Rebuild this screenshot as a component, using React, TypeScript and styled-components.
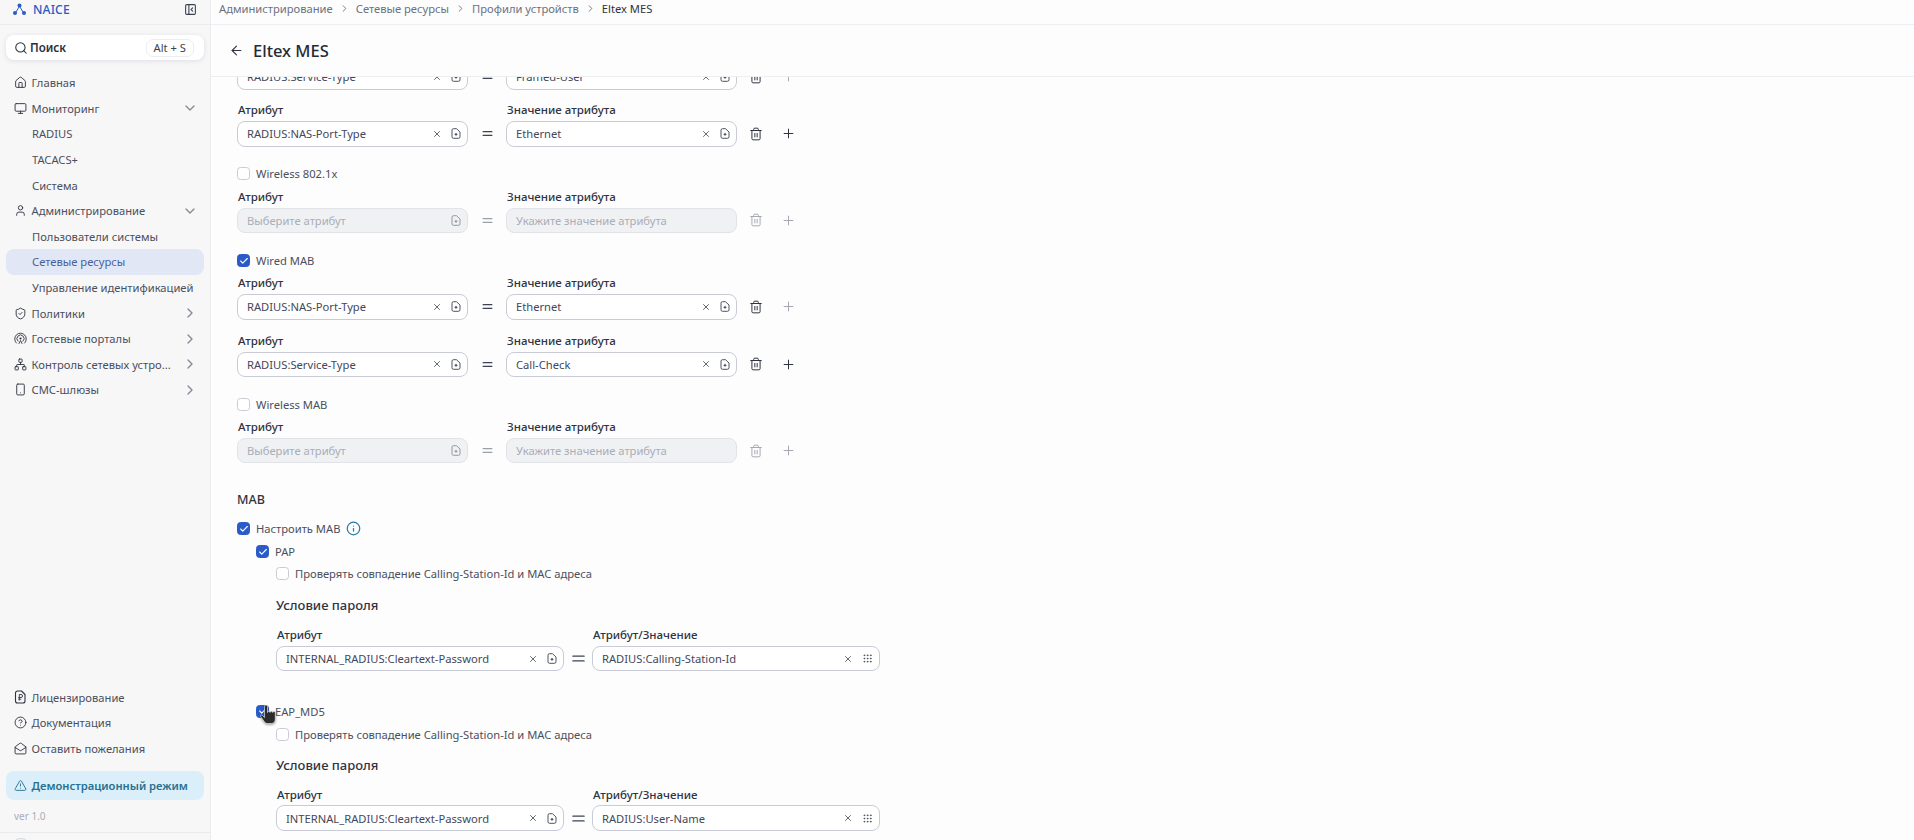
import React from 'react';
import styled, { createGlobalStyle } from 'styled-components';
import { ArrowLeft, ChevronDown, ChevronRight, Check, CircleHelp, Equal, Grip, House, Info, MailOpen, Monitor, Network, PanelLeftClose, Plus, Search, ShieldCheck, Smartphone, Trash2, TriangleAlert, User, X } from 'lucide-react';

const Global = createGlobalStyle`
  html, body { margin: 0; padding: 0; height: 100%; overflow: hidden; background: #fdfdfd; }
  body { font-family: "Noto Sans", "Liberation Sans", sans-serif; font-size: 11.2px; color: #3d4250; }
  * { box-sizing: border-box; }
`;

const Shell = styled.div`display: flex; width: 1914px; height: 840px; overflow: hidden;`;
const Sidebar = styled.aside`width: 211px; height: 840px; flex: none; display: flex; flex-direction: column; background: #f7f7f8; border-right: 1px solid #ebecef; overflow: hidden;`;
const Brand = styled.div`height: 25px; flex: none; display: flex; align-items: center; padding: 0 13px; gap: 7px; border-bottom: 1px solid #ebecef; color: #2c5bc4; font-size: 12.2px; font-weight: 500; svg.toggle { margin-left: auto; color: #3d4250; }`;
const BrandName = styled.span`letter-spacing: .1px; margin-top: -5px;`;
const SearchBox = styled.div`margin: 10px 6px 0; height: 25px; flex: none; background: #fff; border-radius: 8px; box-shadow: 0 1px 5px rgba(30,40,70,.12); display: flex; align-items: center; padding: 0 10px 0 8px; gap: 2px; font-weight: 600; color: #2b2f3a; font-size: 11.6px;`;
const Kbd = styled.span`margin-left: auto; height: 18px; padding: 0 7px; border: 1px solid #eceef1; border-radius: 7px; font-weight: 400; display: flex; align-items: center; font-size: 11.2px; color: #3d4250;`;
const Nav = styled.nav`margin-top: 10px; padding: 0 6px; display: flex; flex-direction: column;`;
const BottomNav = styled(Nav)`margin-top: 0;`;
const NavRow = styled.div<{ $child?: boolean; $active?: boolean }>`
  height: 25.6px; flex: none; display: flex; align-items: center; gap: 5px; border-radius: 8px; white-space: nowrap;
  padding-left: ${p => (p.$child ? '26px' : '7.5px')}; padding-right: 8px; font-size: 11.2px;
  color: ${p => (p.$active ? '#4a5f9c' : '#4b4f5c')}; background: ${p => (p.$active ? '#e1e7f5' : 'transparent')};
  svg { flex: none; }
`;
const NavText = styled.span`overflow: visible;`;
const Chevron = styled.span`margin-left: auto; display: flex; color: #858a96; margin-right: -2px;`;
const Spacer = styled.div`flex: 1;`;
const Demo = styled.div`margin: 10px 6px 0; height: 29px; flex: none; border-radius: 8px; background: #dbeffa; color: #28708f; font-weight: 600; font-size: 11.2px; display: flex; align-items: center; gap: 5px; padding: 0 7.5px;`;
const Version = styled.div`height: 33px; flex: none; padding: 0 14px; display: flex; align-items: center; font-size: 10px; color: #a9adb6; border-bottom: 1px solid #e9eaee;`;
const UserStub = styled.div`height: 7px; flex: none; padding: 5px 0 0 11px;`;
const Avatar = styled.div`width: 20px; height: 20px; border-radius: 50%; border: 1px solid #d4d6db;`;

const Main = styled.main`flex: 1; min-width: 0; height: 840px; display: flex; flex-direction: column; overflow: hidden; background: #fdfdfd;`;
const Crumbs = styled.div`height: 25px; flex: none; padding: 0 9px 8px 8px; display: flex; align-items: center; gap: 7px; border-bottom: 1px solid #eeeff1; font-size: 11.2px; color: #6b7180; svg { margin: 0 -1px; }`;
const Current = styled.span`color: #2f3340;`;
const PageHead = styled.header`height: 52px; flex: none; display: flex; align-items: center; padding: 0 0 0 18px; gap: 9px; border-bottom: 1px solid #eceef0; background: #fdfdfd;`;
const Title = styled.h1`margin: 0; font-size: 16.5px; line-height: 24px; font-weight: 500; color: #262a35;`;
const Scroll = styled.div`flex: 1; overflow: hidden; padding: 0 0 0 26px;`;
const Content = styled.div`margin-top: -31.5px; display: flex; flex-direction: column; width: 700px;`;
const Row = styled.div<{ $top: number; $indent?: number }>`margin-top: ${p => p.$top}px; margin-left: ${p => p.$indent || 0}px; display: flex; align-items: flex-end; height: 44.2px;`;
const Col = styled.div<{ $w: number }>`width: ${p => p.$w}px; flex: none; display: flex; flex-direction: column; gap: 3px;`;
const Label = styled.div`font-size: 11.5px; font-weight: 500; color: #2f3340; height: 15.6px; line-height: 15px; padding-left: 1px;`;
const Box = styled.div<{ $disabled?: boolean }>`height: 25.6px; border: 1px solid ${p => (p.$disabled ? '#e1e3e8' : '#c9ccd6')}; border-radius: 8px; background: ${p => (p.$disabled ? '#f0f1f3' : '#fff')}; display: flex; align-items: center; padding: 0 6px 0 9px; font-size: 11.2px; color: ${p => (p.$disabled ? '#a9adb8' : '#43475a')}; svg { flex: none; color: ${p => (p.$disabled ? '#8b8f99' : '#3d4250')}; }`;
const BoxText = styled.span`flex: 1; white-space: nowrap; overflow: hidden;`;
const ClearIcon = styled(X)`margin-right: 9px;`;
const EmptyIcon = styled.span`width: 11px;`;
const EqSign = styled.div<{ $w: number; $muted?: boolean }>`width: ${p => p.$w}px; height: 25.6px; flex: none; display: flex; align-items: center; justify-content: center; color: ${p => (p.$muted ? '#9b9fa8' : '#3d4250')};`;
const Action = styled.div<{ $muted?: boolean; $w: number }>`width: ${p => p.$w}px; height: 25.6px; flex: none; display: flex; align-items: center; justify-content: center; color: ${p => (p.$muted ? '#a5a8b0' : '#2f3340')};`;
const CheckLine = styled.label<{ $top: number; $indent?: number }>`margin-top: ${p => p.$top}px; margin-left: ${p => p.$indent || 0}px; height: 16px; display: flex; align-items: center; gap: 6px; font-size: 11.2px; color: #4b4f5c; position: relative;`;
const Tick = styled.span<{ $on?: boolean }>`width: 13px; height: 13px; flex: none; border-radius: 3.5px; border: 1px solid ${p => (p.$on ? '#2a5bc8' : '#c9ccd6')}; background: ${p => (p.$on ? '#2a5bc8' : '#fff')}; color: #fff; display: flex; align-items: center; justify-content: center;`;
const Heading = styled.div<{ $top: number; $indent?: number; $size: number }>`margin-top: ${p => p.$top}px; margin-left: ${p => p.$indent || 0}px; font-size: ${p => p.$size}px; font-weight: 500; color: #2f3340; height: 18px; line-height: 18px;`;
const InfoMark = styled.span`display: flex; color: #2a7ba8;`;
const Cursor = styled.svg`position: absolute; left: 4px; top: 2px; filter: drop-shadow(0 1px 1px rgba(0,0,0,.4));`;

function DocIcon() {
  return <svg width="10" height="11" viewBox="0 0 10 11" fill="none" stroke="currentColor" strokeWidth=".9" strokeLinejoin="round">
    <path d="M2.500 .7h3L9 4v4.800a1.500 1.500 0 0 1-1.500 1.500h-5A1.500 1.500 0 0 1 1 8.800V2.200A1.500 1.500 0 0 1 2.500 .7Z" />
    <path d="M5 4.900v2.800M3.600 6.300h2.800" strokeWidth="1" />
  </svg>;
}
function LicenseIcon(p: any) {
  return <svg width="13" height="14" viewBox="0 0 13 14" fill="none" stroke="#2f3340" strokeWidth="1.1" strokeLinejoin="round" style={{ flex: 'none' }}>
    <path d="M3.500 1h4L11 4.500V11a2 2 0 0 1-2 2H3.500a2 2 0 0 1-2-2V3a2 2 0 0 1 2-2Z" />
    <path d="M5.300 10.500v-6H7a1.500 1.500 0 0 1 0 3H4.300M4.300 9.200h3" strokeWidth=".9" />
  </svg>;
}
function PortalIcon(p: any) {
  return <svg width="13" height="13" viewBox="0 0 13 13" fill="none" stroke="#2f3340" strokeWidth=".9" strokeLinecap="round">
    <path d="M2.300 11A5.800 5.800 0 1 1 10.700 11" />
    <path d="M4 9.200A3.600 3.600 0 1 1 9 9.200" />
    <circle cx="6.500" cy="6.500" r="1.100" fill="#2f3340" stroke="none" />
    <path d="M5 11.500 6.500 8.500l1.500 3" />
  </svg>;
}

const navTop: [React.ComponentType<any> | null, string, ('d' | 'r')?, boolean?][] = [
  [House, 'Главная'], [Monitor, 'Мониторинг', 'd'], [null, 'RADIUS'], [null, 'TACACS+'], [null, 'Система'],
  [User, 'Администрирование', 'd'], [null, 'Пользователи системы'], [null, 'Сетевые ресурсы', undefined, true], [null, 'Управление идентификацией'],
  [ShieldCheck, 'Политики', 'r'], [PortalIcon, 'Гостевые порталы', 'r'], [Network, 'Контроль сетевых устро...', 'r'], [Smartphone, 'СМС-шлюзы', 'r'],
];
const navBottom: [React.ComponentType<any>, string][] = [[LicenseIcon, 'Лицензирование'], [CircleHelp, 'Документация'], [MailOpen, 'Оставить пожелания']];

function Logo() {
  return <svg width="13" height="13" viewBox="0 0 13 13" fill="#2c5bc4" style={{ marginTop: -5 }}>
    <circle cx="6.500" cy="2.500" r="2" /><circle cx="2" cy="10" r="2" /><circle cx="11" cy="10" r="2" />
    <path d="M6 4 3 9M7 4l3 5" stroke="#2c5bc4" strokeWidth="1" />
  </svg>;
}

function Attr({ text, disabled, icon = 'doc', clear = true, placeholder }: { text?: string; disabled?: boolean; icon?: 'doc' | 'grip' | 'none'; clear?: boolean; placeholder?: string }) {
  return <Box $disabled={disabled}>
    <BoxText>{text || placeholder}</BoxText>
    {clear && <ClearIcon size={10} strokeWidth={1.9} />}
    {icon === 'doc' && <DocIcon />}
    {icon === 'grip' && <Grip size={11} strokeWidth={1.6} />}
    {icon === 'none' && <EmptyIcon />}
  </Box>;
}

function AttrRow({ a, v, top, disabled, plusOn = true }: { a?: string; v?: string; top: number; disabled?: boolean; plusOn?: boolean }) {
  return <Row $top={top}>
    <Col $w={231}><Label>Атрибут</Label><Attr text={a} placeholder="Выберите атрибут" disabled={disabled} clear={!disabled} /></Col>
    <EqSign $w={38} $muted={disabled}><Equal size={15} strokeWidth={1.8} /></EqSign>
    <Col $w={231}><Label>Значение атрибута</Label><Attr text={v} placeholder="Укажите значение атрибута" disabled={disabled} icon={disabled ? 'none' : 'doc'} clear={!disabled} /></Col>
    <Action $w={38} $muted={disabled}><Trash2 size={14} strokeWidth={1.7} /></Action>
    <Action $w={26} $muted={!plusOn}><Plus size={15} strokeWidth={1.6} /></Action>
  </Row>;
}

function PassRow({ v, top }: { v: string; top: number }) {
  return <Row $top={top} $indent={39}>
    <Col $w={288}><Label>Атрибут</Label><Attr text="INTERNAL_RADIUS:Cleartext-Password" /></Col>
    <EqSign $w={28}><Equal size={19} strokeWidth={1.8} /></EqSign>
    <Col $w={288}><Label>Атрибут/Значение</Label><Attr text={v} icon="grip" /></Col>
  </Row>;
}

function CheckItem({ on, text, top, indent, children }: { on?: boolean; text: string; top: number; indent?: number; children?: React.ReactNode }) {
  return <CheckLine $top={top} $indent={indent}>
    <Tick $on={on}>{on && <Check size={10} strokeWidth={2.6} />}</Tick>{text}{children}
  </CheckLine>;
}

export default function App() {
  return <Shell>
    <Global />
    <Sidebar>
      <Brand><Logo /><BrandName>NAICE</BrandName><PanelLeftClose className="toggle" size={13} style={{ marginTop: -5 }} /></Brand>
      <SearchBox><Search size={14} strokeWidth={1.8} />Поиск<Kbd>Alt + S</Kbd></SearchBox>
      <Nav>
        {navTop.map(([Icon, label, chev, active]) => <NavRow key={label} $child={!Icon} $active={active}>
          {Icon && <Icon size={13} strokeWidth={1.7} color="#2f3340" />}
          <NavText>{label}</NavText>
          {chev && <Chevron>{chev === 'd' ? <ChevronDown size={16} /> : <ChevronRight size={16} />}</Chevron>}
        </NavRow>)}
      </Nav>
      <Spacer />
      <BottomNav>
        {navBottom.map(([Icon, label]) => <NavRow key={label}><Icon size={13} strokeWidth={1.7} color="#2f3340" /><NavText>{label}</NavText></NavRow>)}
      </BottomNav>
      <Demo><TriangleAlert size={13} strokeWidth={1.7} />Демонстрационный режим</Demo>
      <Version>ver 1.0</Version>
      <UserStub><Avatar /></UserStub>
    </Sidebar>
    <Main>
      <Crumbs>
        <span>Администрирование</span><ChevronRight size={11} /><span>Сетевые ресурсы</span><ChevronRight size={11} /><span>Профили устройств</span><ChevronRight size={11} /><Current>Eltex MES</Current>
      </Crumbs>
      <PageHead><ArrowLeft size={15} strokeWidth={1.7} color="#2f3340" /><Title>Eltex MES</Title></PageHead>
      <Scroll>
        <Content>
          <AttrRow a="RADIUS:Service-Type" v="Framed-User" top={0} plusOn={false} />
          <AttrRow a="RADIUS:NAS-Port-Type" v="Ethernet" top={12.8} />
          <CheckItem text="Wireless 802.1x" top={19.3} />
          <AttrRow disabled top={7} plusOn={false} />
          <CheckItem on text="Wired MAB" top={19.8} />
          <AttrRow a="RADIUS:NAS-Port-Type" v="Ethernet" top={6.4} plusOn={false} />
          <AttrRow a="RADIUS:Service-Type" v="Call-Check" top={13.4} />
          <CheckItem text="Wireless MAB" top={19.8} />
          <AttrRow disabled top={6.4} plusOn={false} />
          <Heading $top={27.2} $size={12.5}>MAB</Heading>
          <CheckItem on text="Настроить MAB" top={12.2}><InfoMark><Info size={15} strokeWidth={2} /></InfoMark></CheckItem>
          <CheckItem on text="PAP" top={7} indent={19} />
          <CheckItem text="Проверять совпадение Calling-Station-Id и MAC адреса" top={6} indent={39} />
          <Heading $top={14} $indent={39} $size={13}>Условие пароля</Heading>
          <PassRow v="RADIUS:Calling-Station-Id" top={13.4} />
          <CheckItem on text="EAP_MD5" top={31.7} indent={19}>
            <Cursor width="16" height="19" viewBox="0 0 16 19" fill="#2b2b2b" stroke="#fff" strokeWidth=".6">
              <path d="M4.500 1.500a1.500 1.500 0 0 1 3 0V7.500a1.300 1.300 0 0 1 2.600 0 1.300 1.300 0 0 1 2.600 0 1.300 1.300 0 0 1 2.600.6V14c0 3-1.500 4.500-4 4.500H7.500c-1.500 0-2.500-.8-3.300-2L.6 11.500c-.6-1 .8-2 1.700-1.100L4.500 12.500Z" />
            </Cursor>
          </CheckItem>
          <CheckItem text="Проверять совпадение Calling-Station-Id и MAC адреса" top={7} indent={39} />
          <Heading $top={14} $indent={39} $size={13}>Условие пароля</Heading>
          <PassRow v="RADIUS:User-Name" top={12.6} />
        </Content>
      </Scroll>
    </Main>
  </Shell>;
}
